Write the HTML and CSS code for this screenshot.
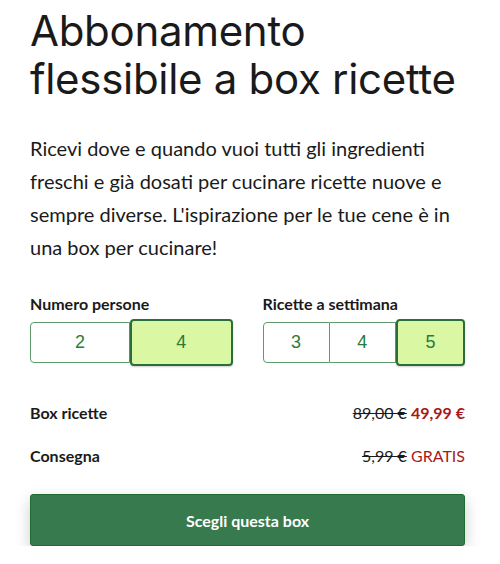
FILE: index.html
```html
<!DOCTYPE html>
<html lang="it">
<head>
<meta charset="utf-8">
<title>Abbonamento flessibile a box ricette</title>
<link rel="stylesheet" href="styles.css">
</head>
<body>
<main class="page">
  <h1 class="title">Abbonamento flessibile a box ricette</h1>
  <p class="intro">Ricevi dove e quando vuoi tutti gli ingredienti freschi e già dosati per cucinare ricette nuove e sempre diverse. L'ispirazione per le tue cene è in una box per cucinare!</p>

  <div class="options">
    <div class="option">
      <div class="option-label">Numero persone</div>
      <div class="toggle">
        <button class="toggle-btn">2</button>
        <button class="toggle-btn is-active">4</button>
      </div>
    </div>
    <div class="option">
      <div class="option-label">Ricette a settimana</div>
      <div class="toggle">
        <button class="toggle-btn">3</button>
        <button class="toggle-btn">4</button>
        <button class="toggle-btn is-active">5</button>
      </div>
    </div>
  </div>

  <div class="summary">
    <div class="summary-row">
      <span class="summary-label">Box ricette</span>
      <span class="summary-price"><s class="old">89,00 €</s> <span class="new">49,99 €</span></span>
    </div>
    <div class="summary-row">
      <span class="summary-label">Consegna</span>
      <span class="summary-price"><s class="old">5,99 €</s> <span class="new free">GRATIS</span></span>
    </div>
  </div>

  <button class="cta">Scegli questa box</button>
</main>
</body>
</html>
```

FILE: styles.css
```css
* { box-sizing: border-box; }

html, body {
  margin: 0;
  padding: 0;
  background: #ffffff;
}

body {
  font-family: Lato, "Liberation Sans", sans-serif;
  color: #1a1a1a;
}

.page {
  width: 500px;
  padding: 7px 35px 0 30px;
}

.title {
  margin: 0;
  font-family: Inter, "Liberation Sans", sans-serif;
  font-weight: 400;
  font-size: 42px;
  line-height: 48px;
  letter-spacing: -0.3px;
  color: #1a1a1a;
}

.intro {
  margin: 29px 0 0;
  font-size: 20px;
  line-height: 33px;
  color: #1a1a1a;
}

.options {
  display: grid;
  grid-template-columns: 1fr 1fr;
  column-gap: 30px;
  margin-top: 30px;
}

.option-label {
  font-weight: 700;
  font-size: 16px;
  line-height: 20px;
  margin-bottom: 8px;
}

.toggle {
  display: flex;
  height: 41px;
}

.toggle-btn {
  flex: 1 1 0;
  margin: 0;
  padding: 0;
  background: #ffffff;
  border: 1px solid #5e9a6c;
  border-left: 0;
  font-family: "Liberation Sans", Arial, sans-serif;
  font-size: 18px;
  color: #2a7a3c;
  cursor: pointer;
}

.toggle-btn:first-child {
  border-left: 1px solid #5e9a6c;
  border-radius: 4px 0 0 4px;
}

.toggle-btn:last-child {
  border-radius: 0 4px 4px 0;
}

.toggle-btn.is-active {
  background: #daf7a4;
  border: 2px solid #2b6e3b;
  border-radius: 4px;
  margin: -3px 0;
  box-shadow: 0 1px 2px rgba(0, 0, 0, 0.2);
}

.summary {
  margin-top: 28px;
}

.summary-row {
  display: flex;
  justify-content: space-between;
  align-items: center;
  height: 43px;
  font-size: 16px;
}

.summary-label {
  font-weight: 700;
}

.old {
  color: #1a1a1a;
}

.new {
  color: #a8191a;
  font-weight: 700;
}

.new.free {
  font-weight: 400;
}

.cta {
  display: block;
  width: 100%;
  height: 52px;
  margin-top: 17px;
  background: #377a4e;
  border: 1px solid #1e6c33;
  border-radius: 3px;
  color: #ffffff;
  font-family: Lato, "Liberation Sans", sans-serif;
  font-weight: 700;
  font-size: 16px;
  box-shadow: 0 6px 16px rgba(0, 0, 0, 0.2);
  cursor: pointer;
}
```
